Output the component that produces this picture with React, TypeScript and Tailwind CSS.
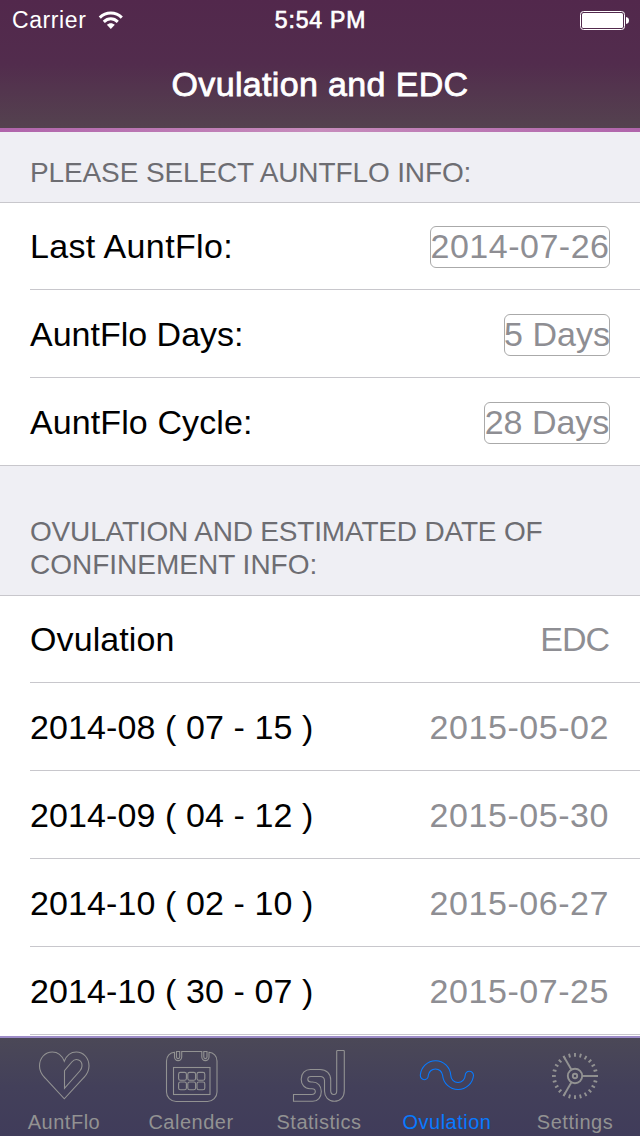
import { useState } from "react";
import type { ReactNode } from "react";

type Row = { label: string; value: string; labelClass: string; valueClass: string };

const infoRows: Row[] = [
  { label: "Last AuntFlo:", value: "2014-07-26", labelClass: "tracking-[0.35px]", valueClass: "w-[180px] tracking-[0.5px]" },
  { label: "AuntFlo Days:", value: "5 Days", labelClass: "", valueClass: "w-[106px]" },
  { label: "AuntFlo Cycle:", value: "28 Days", labelClass: "tracking-[0.1px]", valueClass: "w-[126px]" },
];

const resultRows: Row[] = [
  { label: "Ovulation", value: "EDC", labelClass: "tracking-[0.1px]", valueClass: "tracking-[-1px]" },
  { label: "2014-08 ( 07 - 15 )", value: "2015-05-02", labelClass: "tracking-[0.1px]", valueClass: "tracking-[0.55px]" },
  { label: "2014-09 ( 04 - 12 )", value: "2015-05-30", labelClass: "tracking-[0.1px]", valueClass: "tracking-[0.55px]" },
  { label: "2014-10 ( 02 - 10 )", value: "2015-06-27", labelClass: "tracking-[0.1px]", valueClass: "tracking-[0.55px]" },
  { label: "2014-10 ( 30 - 07 )", value: "2015-07-25", labelClass: "tracking-[0.1px]", valueClass: "tracking-[0.55px]" },
];

function Icon({ children }: { children: ReactNode }) {
  return (
    <svg width="60" height="60" viewBox="0 0 60 60" fill="none" stroke="currentColor" strokeWidth="1.1">
      {children}
    </svg>
  );
}

function HeartIcon() {
  return (
    <Icon>
      <path d="M30.3 15.3C28 9.5 23.5 6 18.3 6C11 6 5.5 12 5.5 20C5.5 25 8 29 11 32L30.3 52.8L49.5 32C52.5 29 55 25 55 20C55 12 49.5 6 42.3 6C37 6 32.5 9.5 30.3 15.3Z" />
      <path d="M30.5 42.3V24.7L37.8 16C42 11.2 48.3 14.2 48 20C48 22 47 23.5 45.8 25Z" />
    </Icon>
  );
}

function CalendarIcon() {
  return (
    <Icon>
      <path d="M13.5 6.3C9 6.5 5.5 10 5.5 15V46A9.5 9.5 0 0 0 15 55.5H46.5A9.5 9.5 0 0 0 56 46V15C56 10 52.5 6.5 48 6.3V11A3.6 3.6 0 0 1 40.8 11V5.5H20.7V11A3.6 3.6 0 0 1 13.5 11Z" />
      <path d="M15.5 5.5H18.7V11A1.6 1.6 0 0 1 15.5 11ZM42.8 5.5H46V11A1.6 1.6 0 0 1 42.8 11Z" />
      <rect x="12.5" y="21.5" width="36.5" height="27" />
      {[26.4, 36].map((y) =>
        [17.6, 26.8, 36].map((x) => (
          <rect key={`${x}-${y}`} x={x} y={y} width="7.8" height="7.8" rx="1.8" />
        ))
      )}
    </Icon>
  );
}

function StatsIcon() {
  return (
    <Icon>
      <path d="M4.5 48.5H22.7C25 48.5 26.3 47.3 26.3 45.6C26.3 43.8 25 42.7 23 42.7H21C15.5 42.7 12.2 38.5 12.2 33.2C12.2 27.3 16 23.5 21.5 23.5H31C37.5 23.5 41.7 27.8 41.7 34V44.5C41.7 47 43 48.5 44.9 48.5C46.7 48.5 47.7 47 47.7 44.7V5.3Q47.7 4.5 48.5 4.5H54.5Q55.3 4.5 55.3 5.3V44.5C55.3 51 51.5 55.3 45.3 55.3C39.5 55.3 35.5 51 35.5 45V34.7C35.5 32 34 30.5 31 30.5H22C20 30.5 18.8 31.7 18.8 33.3C18.8 35 20 36 22 36H23.5C28.7 36 32.3 39.7 32.3 45.4C32.3 51.2 28.8 55.3 23.7 55.3H4.5Z" />
    </Icon>
  );
}

function WaveIcon() {
  return (
    <Icon>
      <path d="M3.3 29.3A15.3 15.9 0 0 1 33.8 29.3A7.2 7.2 0 0 0 48.2 29.3A4.2 4.8 0 0 1 56.5 29.3A15.5 15.5 0 0 1 25.6 29.3A7.2 7.2 0 0 0 11.3 29.3A4 4.4 0 0 1 3.3 29.3Z" />
    </Icon>
  );
}

function DialIcon() {
  return (
    <Icon>
      <g strokeWidth="1.9">
        {Array.from({ length: 24 }, (_, i) => (
          <path key={i} d="M49.2 30H53" transform={`rotate(${i * 15} 30 30)`} />
        ))}
        {[0, 120, 240].map((angle) => (
          <path key={angle} d="M37.4 30H53" transform={`rotate(${angle} 30 30)`} />
        ))}
        <circle cx="30" cy="30" r="7.2" />
        <circle cx="30" cy="30" r="2.2" />
      </g>
    </Icon>
  );
}

const tabs = [
  { name: "AuntFlo", icon: <HeartIcon />, width: "w-32" },
  { name: "Calender", icon: <CalendarIcon />, width: "w-[126px] mr-px" },
  { name: "Statistics", icon: <StatsIcon />, width: "w-32" },
  { name: "Ovulation", icon: <WaveIcon />, width: "w-32" },
  { name: "Settings", icon: <DialIcon />, width: "w-32" },
];

export default function App() {
  const [active, setActive] = useState("Ovulation");

  return (
    <div className="w-[640px] h-[1136px] flex flex-col overflow-hidden bg-white font-['Liberation_Sans',Arial,sans-serif] text-[34px] leading-[40px]">
      {/* Header */}
      <header className="h-32 shrink-0 bg-linear-to-b from-[#52284c] via-[#522c4d] to-[#54424f] text-white">
        <div className="h-10 grid grid-cols-3 items-center pl-3 pr-[11px] text-[23px]">
          <div className="flex items-center gap-3">
            <span className="tracking-[0.6px]">Carrier</span>
            <svg width="26" height="19" viewBox="0 0 26 19" fill="none" stroke="white" strokeWidth="3">
              <path d="M1.8 6.6C8 0.4 17.6 0.4 23.8 6.6" />
              <path d="M5.8 10.8C10 6.8 15.6 6.8 19.8 10.8" />
              <path d="M12.8 18L8.8 13.8C11.2 11.6 14.4 11.6 16.8 13.8Z" fill="white" stroke="none" />
            </svg>
          </div>
          <span className="text-center whitespace-nowrap tracking-[0.8px] [-webkit-text-stroke:0.7px_white]">5:54 PM</span>
          <svg className="justify-self-end" width="49" height="19" viewBox="0 0 49 19" fill="none">
            <rect x="0.5" y="0.5" width="44" height="18" rx="3" stroke="white" />
            <rect x="2" y="2" width="41" height="15" rx="1.5" fill="white" />
            <path d="M46 6C48 6.3 49 7.5 49 9.5C49 11.5 48 12.7 46 13Z" fill="white" />
          </svg>
        </div>
        <h1 className="h-[88px] flex items-center justify-center tracking-[0.35px] [-webkit-text-stroke:0.8px_white]">
          Ovulation and EDC
        </h1>
      </header>
      <div className="h-1 shrink-0 bg-linear-to-r from-[#b064ab] via-[#c78cbc] to-[#b064ab]" />

      {/* Info section */}
      <h2 className="h-[71px] shrink-0 flex items-end px-[30px] pb-[13px] border-b border-[#c8c7cc] bg-[#efeff4] text-[28px] leading-[33px] tracking-[-0.12px] text-[#6d6d72]">
        PLEASE SELECT AUNTFLO INFO:
      </h2>
      <div className="shrink-0 border-b border-[#c8c7cc]">
        {infoRows.map((row, i) => (
          <div
            key={row.label}
            className={`ml-[30px] pr-[30px] flex items-center justify-between border-[#c8c7cc] ${i === 1 ? "h-[88px]" : "h-[87px]"} ${i < 2 ? "border-b" : ""}`}
          >
            <span className={row.labelClass}>{row.label}</span>
            <span className={`mt-[2px] h-[42px] pb-[2px] flex items-center justify-center whitespace-nowrap rounded-md border border-[#aaaaaa] text-[#8e8e93] ${row.valueClass}`}>
              {row.value}
            </span>
          </div>
        ))}
      </div>

      {/* Results section */}
      <h2 className="h-[130px] shrink-0 flex items-end px-[30px] pb-[14px] border-b border-[#c8c7cc] bg-[#efeff4] text-[28px] leading-[33px] text-[#6d6d72]">
        <span>
          <span className="tracking-[-0.18px]">OVULATION AND ESTIMATED DATE OF</span>
          <br />
          CONFINEMENT INFO:
        </span>
      </h2>
      <div className="h-[440px] shrink-0">
        {resultRows.map((row, i) => (
          <div
            key={row.label}
            className={`ml-[30px] pr-[31px] flex items-center justify-between border-b border-[#c8c7cc] ${i === 0 ? "h-[87px]" : "h-[88px]"}`}
          >
            <span className={`whitespace-nowrap ${row.labelClass}`}>{row.label}</span>
            <span className={`text-[#8e8e93] ${row.valueClass}`}>{row.value}</span>
          </div>
        ))}
      </div>

      {/* Tab bar */}
      <nav className="h-[100px] shrink-0 flex border-t-2 border-[#9d8cc8] bg-linear-to-b from-[#4b4857] via-[#43405a] to-[#403c5a]">
        {tabs.map((tab) => (
          <button
            key={tab.name}
            onClick={() => setActive(tab.name)}
            className={`pt-2 flex flex-col items-center text-xl leading-6 ${tab.width} ${active === tab.name ? "text-[#087aff]" : "text-[#929292]"}`}
          >
            {tab.icon}
            <span className="mt-1 tracking-[0.5px]">{tab.name}</span>
          </button>
        ))}
      </nav>
    </div>
  );
}
